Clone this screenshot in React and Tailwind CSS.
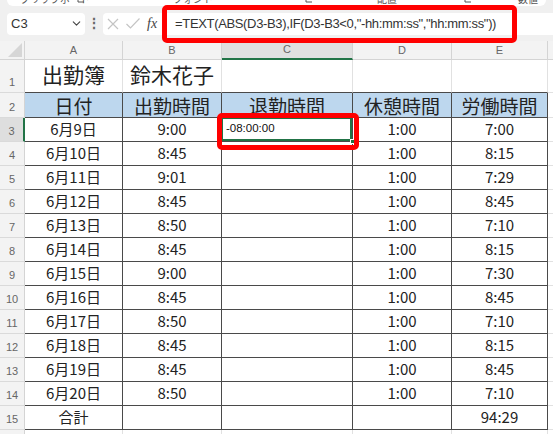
import React from 'react'
import { ChevronDown } from 'lucide-react'

const W = ['w-[98px]', 'w-[99px]', 'w-[131px]', 'w-[99px]', 'w-[96px]']
const LETTERS = ['A', 'B', 'C', 'D', 'E']

const rows = [
  ['6月9日', '9:00', '', '1:00', '7:00'],
  ['6月10日', '8:45', '', '1:00', '8:15'],
  ['6月11日', '9:01', '', '1:00', '7:29'],
  ['6月12日', '8:45', '', '1:00', '8:45'],
  ['6月13日', '8:50', '', '1:00', '7:10'],
  ['6月14日', '8:45', '', '1:00', '8:15'],
  ['6月15日', '9:00', '', '1:00', '7:30'],
  ['6月16日', '8:45', '', '1:00', '8:45'],
  ['6月17日', '8:50', '', '1:00', '7:10'],
  ['6月18日', '8:45', '', '1:00', '8:15'],
  ['6月19日', '8:45', '', '1:00', '8:45'],
  ['6月20日', '8:50', '', '1:00', '7:10'],
  ['合計', '', '', '', '94:29'],
]

const cjk = "font-['Noto_Sans_CJK_JP','Noto_Sans',sans-serif]"

function RowHead({ n, active, h }) {
  return (
    <div
      className={`w-[25px] shrink-0 ${h} flex items-end justify-center pb-[2px] border-b border-[#dadada] text-[11px] text-[#666] font-['Liberation_Sans',sans-serif] ${
        active ? 'bg-[#dedede] border-r-2 border-r-[#217346]' : 'bg-[#f3f3f3] border-r border-r-[#d4d4d4]'
      }`}
    >
      {n}
    </div>
  )
}

function Filler({ h }) {
  return <div className={`flex-1 ${h} bg-white border-b border-[#e1e1e1]`} />
}

// small dialog-launcher mark in the ribbon group labels
function Launcher() {
  return (
    <svg width="8" height="8" viewBox="0 0 8 8" className="shrink-0">
      <path d="M1 1 V7 H7 M3 5 L7 1" stroke="#555" strokeWidth="1" fill="none" />
    </svg>
  )
}

export default function App() {
  return (
    <div className="relative w-[553px] h-[434px] overflow-hidden bg-[#f0f0f0] font-['Liberation_Sans',sans-serif]">
      {/* ribbon bottom edge, labels cut off by the window */}
      <div className="mx-[7px] h-[6px] bg-white rounded-b-[6px] overflow-hidden relative text-[10px] leading-[10px] text-[#555]">
        <span className={`absolute left-[13px] -top-[6px] ${cjk}`}>クリップボード</span>
        <span className="absolute left-[70px] -top-[5px]"><Launcher /></span>
        <span className={`absolute left-[166px] -top-[6px] ${cjk}`}>フォント</span>
        <span className="absolute left-[298px] -top-[5px]"><Launcher /></span>
        <span className={`absolute left-[370px] -top-[6px] ${cjk}`}>配置</span>
        <span className="absolute left-[457px] -top-[5px]"><Launcher /></span>
        <span className={`absolute left-[511px] -top-[6px] ${cjk}`}>数値</span>
      </div>

      {/* formula bar */}
      <div className="h-[35px] flex items-center">
        <div className="ml-[7px] w-[78px] h-[22px] bg-white rounded-[4px] flex items-center justify-between pl-[4px] pr-[2px]">
          <span className="text-[13px] text-[#333]">C3</span>
          <ChevronDown size={13} strokeWidth={2} className="text-[#444]" />
        </div>
        <div className="w-[18px] flex justify-center text-[#666] text-[14px] font-bold">⋮</div>
        <div className="flex-1 h-[22px] bg-white rounded-l-[4px] flex items-center">
          <svg width="12" height="12" viewBox="0 0 12 12" className="ml-[4px]">
            <path d="M1 1 L11 11 M11 1 L1 11" stroke="#c4c4c4" strokeWidth="1.2" fill="none" />
          </svg>
          <svg width="16" height="13" viewBox="0 0 16 13" className="ml-[6px]">
            <path d="M1.5 7 L5.5 11 L14.5 1.5" stroke="#c4c4c4" strokeWidth="1.2" fill="none" />
          </svg>
          <span className="ml-[6px] text-[14px] italic text-[#444] font-['Liberation_Serif',serif]">fx</span>
          <span className="ml-[18px] text-[13px] tracking-[-0.35px] text-[#333] whitespace-nowrap">
            =TEXT(ABS(D3-B3),IF(D3-B3&lt;0,"-hh:mm:ss","hh:mm:ss"))
          </span>
        </div>
      </div>

      {/* sheet */}
      <div className="flex flex-col">
        {/* column headers */}
        <div className="flex h-[19px]">
          <div className="w-[25px] shrink-0 h-[19px] bg-[#f3f3f3] border-r border-b border-[#d4d4d4] relative">
            <div className="absolute right-[2px] bottom-[2px] w-0 h-0 border-l-[14px] border-l-transparent border-b-[14px] border-b-[#d6d6d6]" />
          </div>
          {LETTERS.map((l, i) => (
            <div
              key={l}
              className={`${W[i]} shrink-0 h-[19px] flex items-center justify-center text-[11px] text-[#666] border-r border-[#d4d4d4] ${
                i === 2 ? 'bg-[#e0e0e0] border-b-2 border-b-[#217346]' : 'bg-[#f3f3f3] border-b border-b-[#d4d4d4]'
              }`}
            >
              {l}
            </div>
          ))}
          <div className="flex-1 h-[19px] bg-[#f3f3f3] border-b border-[#d4d4d4]" />
        </div>

        {/* row 1 */}
        <div className="flex h-[33px]">
          <RowHead n={1} h="h-[33px]" />
          {['出勤簿', '鈴木花子', '', '', ''].map((t, i) => (
            <div
              key={i}
              className={`${W[i]} shrink-0 h-[33px] bg-white flex items-center justify-center pb-[3px] text-[21px] text-[#222] ${cjk} border-b border-b-[#4a4a4a] border-r border-r-[#e1e1e1]`}
            >
              {t}
            </div>
          ))}
          <Filler h="h-[33px]" />
        </div>

        {/* row 2 headers */}
        <div className="flex h-[25px]">
          <RowHead n={2} h="h-[25px]" />
          {['日付', '出勤時間', '退勤時間', '休憩時間', '労働時間'].map((t, i) => (
            <div
              key={i}
              className={`${W[i]} shrink-0 h-[25px] bg-[#bdd7ee] flex items-center justify-center text-[19px] leading-none text-[#222] ${cjk} border-r border-b border-[#4a4a4a]`}
            >
              {t}
            </div>
          ))}
          <Filler h="h-[25px]" />
        </div>

        {/* data rows */}
        {rows.map((r, ri) => (
          <div key={ri} className="flex h-[24px]">
            <RowHead n={ri + 3} h="h-[24px]" active={ri === 0} />
            {r.map((t, i) =>
              ri === 0 && i === 2 ? (
                <div key={i} className={`${W[i]} shrink-0 h-[24px] bg-white border-r border-b border-[#4a4a4a] relative`}>
                  <div className="absolute inset-0 -top-[1px] -left-[1px] border-2 border-[#217346] flex items-center pl-[3px] text-[11.5px] text-[#111]">
                    -08:00:00
                  </div>
                  <div className="absolute -right-[3px] -bottom-[3px] w-[5px] h-[5px] bg-[#217346] border border-white" />
                </div>
              ) : (
                <div
                  key={i}
                  className={`${W[i]} shrink-0 h-[24px] bg-white flex items-center justify-center text-[15px] text-[#222] ${cjk} border-r border-b border-[#4a4a4a]`}
                >
                  {t}
                </div>
              )
            )}
            <Filler h="h-[24px]" />
          </div>
        ))}

        <div className="flex h-[24px]">
          <RowHead n={16} h="h-[24px]" />
          {W.map((w, i) => (
            <div key={i} className={`${w} shrink-0 h-[24px] bg-white border-r border-b border-[#e1e1e1]`} />
          ))}
          <Filler h="h-[24px]" />
        </div>
      </div>

      {/* red highlight boxes */}
      <div className="absolute left-[162px] top-[5px] w-[355px] h-[38px] border-[5px] border-[#ff0000] rounded-[5px]" />
      <div className="absolute left-[217px] top-[113px] w-[142px] h-[37px] border-[5px] border-[#ff0000] rounded-[5px]" />
    </div>
  )
}
